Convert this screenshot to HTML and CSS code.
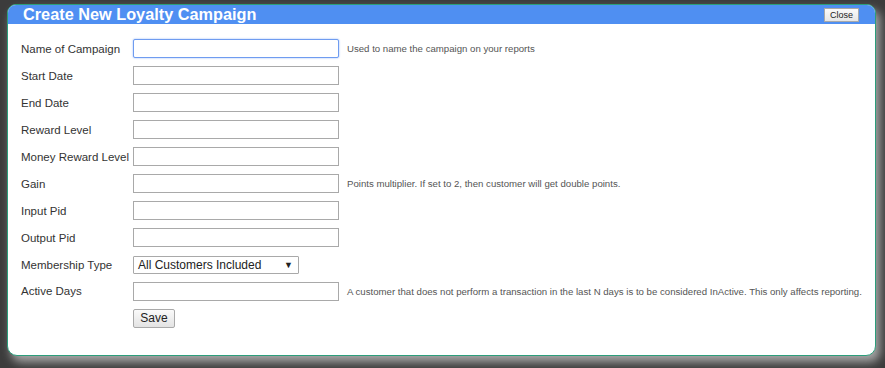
FILE: index.html
```html
<!DOCTYPE html>
<html>
<head>
<meta charset="utf-8">
<link rel="stylesheet" href="styles.css">
</head>
<body>
<div class="dialog">
  <div class="header">
    <span class="title">Create New Loyalty Campaign</span>
    <button class="close-btn" type="button">Close</button>
  </div>
  <div class="form">
    <label class="lbl">Name of Campaign</label>
    <input class="inp focused" type="text">
    <span class="hint">Used to name the campaign on your reports</span>

    <label class="lbl">Start Date</label>
    <input class="inp" type="text">
    <span class="hint"></span>

    <label class="lbl">End Date</label>
    <input class="inp" type="text">
    <span class="hint"></span>

    <label class="lbl">Reward Level</label>
    <input class="inp" type="text">
    <span class="hint"></span>

    <label class="lbl">Money Reward Level</label>
    <input class="inp" type="text">
    <span class="hint"></span>

    <label class="lbl">Gain</label>
    <input class="inp" type="text">
    <span class="hint">Points multiplier. If set to 2, then customer will get double points.</span>

    <label class="lbl">Input Pid</label>
    <input class="inp" type="text">
    <span class="hint"></span>

    <label class="lbl">Output Pid</label>
    <input class="inp" type="text">
    <span class="hint"></span>

    <label class="lbl">Membership Type</label>
    <div class="select"><span>All Customers Included</span><span class="arrow">▼</span></div>
    <span class="hint"></span>

    <label class="lbl">Active Days</label>
    <input class="inp" type="text">
    <span class="hint">A customer that does not perform a transaction in the last N days is to be considered InActive. This only affects reporting.</span>

    <span class="lbl"></span>
    <div><button class="save-btn" type="button">Save</button></div>
    <span class="hint"></span>
  </div>
</div>
</body>
</html>
```

FILE: styles.css
```css
html, body {
  margin: 0;
  padding: 0;
}
body {
  background: #3c3c3c;
  width: 885px;
  height: 368px;
  overflow: hidden;
  font-family: "Liberation Sans", Arial, sans-serif;
  padding-top: 4px;
  padding-left: 7px;
  box-sizing: border-box;
}
.dialog {
  width: 869px;
  height: 352px;
  box-sizing: border-box;
  background: #fff;
  border: 1px solid #2b9e7b;
  border-radius: 9px 9px 10px 10px;
  box-shadow: 4px 6px 10px #a8a8a8;
  overflow: hidden;
}
.header {
  background: #4f8ff2;
  height: 19px;
  display: flex;
  align-items: center;
  justify-content: space-between;
  padding: 0 16px 0 15px;
}
.title {
  color: #fff;
  font-weight: bold;
  font-size: 16.3px;
  line-height: 19px;
  margin-top: -1px;
}
.close-btn {
  font-family: "Liberation Sans", Arial, sans-serif;
  font-size: 9px;
  color: #222;
  background: linear-gradient(#fafafa, #e6e6e6);
  border: 1px solid #a8a8a8;
  height: 14px;
  width: 35px;
  padding: 0;
  margin-top: 1px;
  line-height: 12px;
}
.form {
  display: grid;
  grid-template-columns: 112px 214px 1fr;
  grid-template-rows: repeat(8, 27px) 27px 26px 28px;
  align-items: center;
  padding: 11px 0 0 13px;
}
.lbl {
  font-size: 11.5px;
  color: #333;
}
.inp {
  width: 206px;
  height: 19px;
  box-sizing: border-box;
  border: 1px solid #a9a9a9;
  margin: 0;
  padding: 0;
  outline: none;
}
.inp.focused {
  border: 1px solid #6f9cf0;
  box-shadow: 0 0 2px #8fb2f5;
  border-radius: 2px;
}
.hint {
  font-size: 9.65px;
  color: #555;
}
.select {
  width: 166px;
  height: 18px;
  box-sizing: border-box;
  border: 1px solid #a9a9a9;
  border-radius: 1px;
  display: flex;
  justify-content: space-between;
  align-items: center;
  padding: 0 5px 0 4px;
  font-size: 12px;
  color: #222;
}
.arrow {
  font-size: 9px;
}
.save-btn {
  font-family: "Liberation Sans", Arial, sans-serif;
  font-size: 12px;
  color: #222;
  background: linear-gradient(#fafafa, #e3e3e3);
  border: 1px solid #a9a9a9;
  border-radius: 2px;
  height: 19px;
  width: 42px;
  padding: 0;
  margin-top: 0;
}
```
